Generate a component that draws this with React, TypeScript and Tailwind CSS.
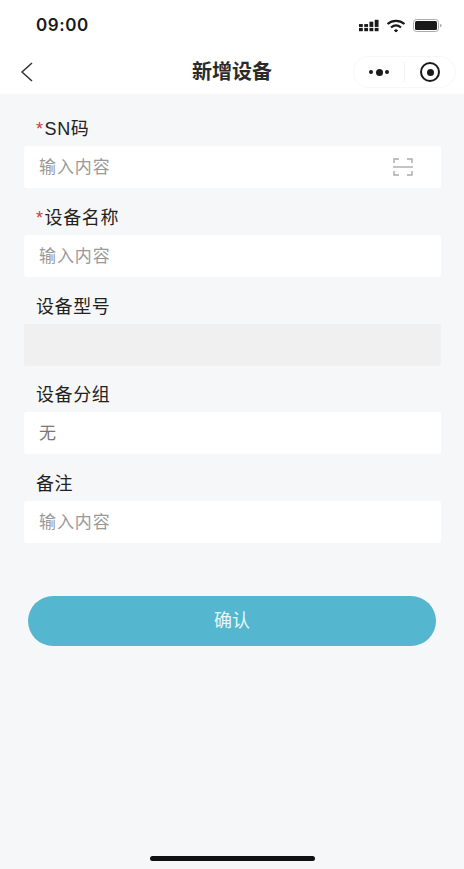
const font = { fontFamily: '"Liberation Sans", "Noto Sans CJK SC", sans-serif' };

interface FieldProps {
  label: string;
  required?: boolean;
  placeholder?: string;
  disabled?: boolean;
  scan?: boolean;
  dark?: boolean;
}

function ScanIcon() {
  return (
    <svg width="22" height="20" viewBox="0 0 22 20" fill="none" stroke="#a8abad" strokeWidth="1.400">
      <path d="M2 6V2h5M15 2h5v4M2 14v4h5M15 18h5v-4" />
      <path d="M1 10h20" />
    </svg>
  );
}

function Field({ label, required, placeholder, disabled, scan, dark }: FieldProps) {
  return (
    <div className="flex flex-col gap-[5px]">
      <div className="h-[24px] pl-[12px] text-[18px] leading-[24px] tracking-[0.6px] text-[#222]">
        {required && <span className="mr-[1px] text-[#c8423c]">*</span>}
        {label}
      </div>
      <div
        className={`flex h-[42px] items-center justify-between rounded-[3px] pl-[15px] pr-[27px] text-[17px] tracking-[0.9px] ${
          disabled ? 'bg-[#f0f0f0]' : 'bg-white'
        } ${dark ? 'text-[#777]' : 'text-[#999]'}`}
      >
        <span className="pt-[1px]">{placeholder}</span>
        {scan && <ScanIcon />}
      </div>
    </div>
  );
}

function StatusBar() {
  return (
    <div className="flex h-[50px] items-center justify-between pl-[36px] pr-[22px] pt-[1px]">
      <span className="text-[17px] font-semibold tracking-[0.6px] text-[#1a1a1a]" style={{ fontFamily: '"Inter", sans-serif' }}>
        09:00
      </span>
      <div className="flex items-center gap-[7px]">
        <svg width="20" height="13" viewBox="0 0 21 13" fill="#1a1a1a">
          <rect x="0" y="9" width="4" height="3.500" />
          <rect x="5.500" y="9" width="4" height="3.500" />
          <rect x="11" y="9" width="4" height="3.500" />
          <rect x="16.500" y="9" width="4" height="3.500" />
          <rect x="0" y="5" width="4" height="3" />
          <rect x="5.500" y="5" width="4" height="3" />
          <rect x="11" y="2.500" width="4" height="5.500" />
          <rect x="16.500" y="0.500" width="4" height="7.500" />
        </svg>
        <svg width="20" height="14" viewBox="0 0 20 14" fill="none" stroke="#1a1a1a" strokeWidth="2.200">
          <path d="M1.500 5C6.500 0.800 13.500 0.800 18.500 5" />
          <path d="M5 8.500c3-2.500 7-2.500 10 0" />
          <path d="M8.300 11.500c1-.9 2.400-.9 3.400 0L10 13z" fill="#1a1a1a" strokeWidth="1" />
        </svg>
        <svg width="29" height="13" viewBox="0 0 29 13" fill="none">
          <rect x="0.500" y="0.500" width="25" height="12" rx="3" stroke="#aaa" />
          <rect x="2" y="2" width="22" height="9" rx="1.500" fill="#1a1a1a" />
          <rect x="27" y="5" width="1.500" height="3" rx="0.700" fill="#aaa" />
        </svg>
      </div>
    </div>
  );
}

function NavBar() {
  return (
    <div className="relative flex h-[44px] items-center justify-between pl-[19px] pr-[8px]">
      <svg width="15" height="22" viewBox="0 0 15 22" fill="none" stroke="#333" strokeWidth="1.500">
        <path d="M13 2L3 11l10 9" />
      </svg>
      <span className="absolute left-0 right-0 text-center text-[20px] font-bold text-[#2a2a2a]">新增设备</span>
      <div className="relative flex h-[32px] w-[103px] items-center rounded-full border border-[#f7f7f7]">
        <div className="flex w-[50px] items-center justify-center gap-[2.500px]">
          <span className="h-[4px] w-[4px] rounded-full bg-[#1a1a1a]" />
          <span className="h-[7px] w-[7px] rounded-full bg-[#1a1a1a]" />
          <span className="h-[4px] w-[4px] rounded-full bg-[#1a1a1a]" />
        </div>
        <div className="h-[20px] w-px bg-[#f2f2f2]" />
        <div className="flex flex-1 items-center justify-center">
          <div className="flex h-[20px] w-[20px] items-center justify-center rounded-full border-2 border-[#1a1a1a]">
            <span className="h-[7px] w-[7px] rounded-full bg-[#1a1a1a]" />
          </div>
        </div>
      </div>
    </div>
  );
}

export default function App() {
  return (
    <div className="flex h-[869px] w-[464px] flex-col overflow-hidden bg-[#f6f7f9]" style={font}>
      <div className="bg-white">
        <StatusBar />
        <NavBar />
      </div>
      <div className="flex flex-1 flex-col">
        <div className="flex flex-col gap-[17.750px] pl-[24px] pr-[23px] pt-[23px]">
          <Field label="SN码" required placeholder="输入内容" scan />
          <Field label="设备名称" required placeholder="输入内容" />
          <Field label="设备型号" disabled />
          <Field label="设备分组" placeholder="无" dark />
          <Field label="备注" placeholder="输入内容" />
        </div>
        <button className="mx-[28px] mt-[53px] h-[50px] rounded-full bg-[#55b6cf] pt-[1px] text-[18px] text-[#e8f7fa]">
          确认
        </button>
        <div className="flex flex-1 items-end justify-center pb-[8px]">
          <div className="h-[5px] w-[165px] rounded-full bg-[#111]" />
        </div>
      </div>
    </div>
  );
}
